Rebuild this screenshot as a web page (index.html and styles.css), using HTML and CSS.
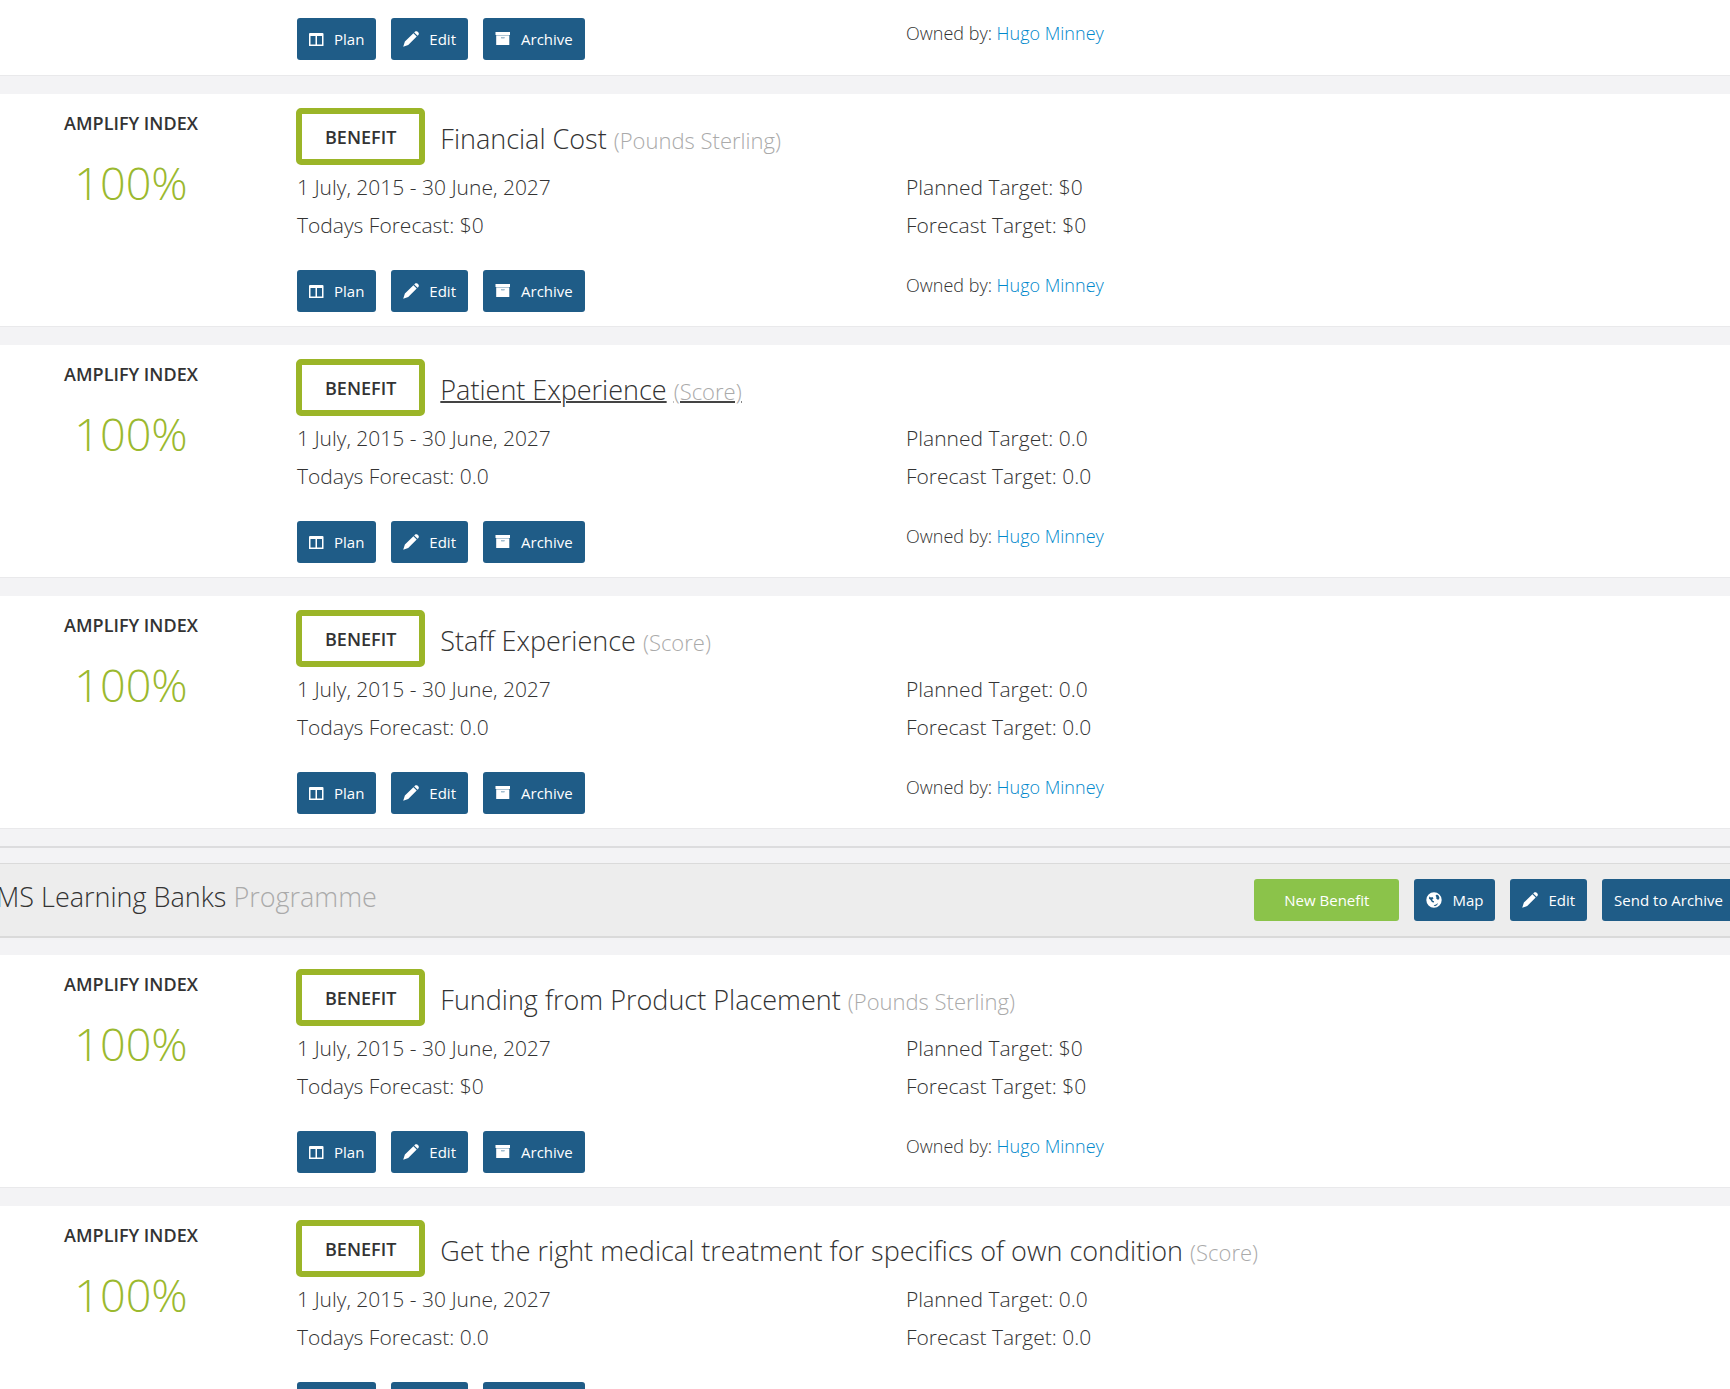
FILE: index.html
```
<!DOCTYPE html>
<html lang="en">
<head>
    <meta charset="UTF-8">
    <meta name="viewport" content="width=device-width, initial-scale=1.0">
    <title>Benefits</title>
    <link rel="stylesheet" href="styles.css">
</head>
<body>
    <!-- icon sprite -->
    <svg class="sprite" aria-hidden="true">
        <symbol id="icon-plan" viewBox="0 0 15 15">
            <path fill="currentColor" fill-rule="evenodd" d="M1 1h12.500a1 1 0 0 1 1 1v11.500a.5.5 0 0 1-.5.5H.5a.5.5 0 0 1-.5-.5V2a1 1 0 0 1 1-1zM1.500 4v8.600h5V4zM8 4v8.600h5V4z"/>
        </symbol>
        <symbol id="icon-edit" viewBox="0 0 16 16">
            <path fill="currentColor" d="M.2 15.800l1.700-5.200 8.500-8.400 3.300 3.300-8.500 8.600zM11.200 1.400l.9-.8c.7-.6 1.600-.6 2.300 0l1 1c.6.7.6 1.600 0 2.300l-.8.9z"/>
        </symbol>
        <symbol id="icon-archive" viewBox="0 0 16 16">
            <path fill="currentColor" fill-rule="evenodd" d="M.5 1H15v3H.5zM1.200 4.600h13.100V14H1.200zM6.200 6v1.300h3.200V6z"/>
            <path fill="currentColor" opacity=".6" d="M1.200 4h13.100v.6H1.200zM6.200 6h3.200v1.300H6.200z"/>
        </symbol>
        <symbol id="icon-globe" viewBox="0 0 16 16">
            <path fill="currentColor" fill-rule="evenodd" d="M8 .3a7.700 7.700 0 1 1 0 15.400A7.700 7.700 0 0 1 8 .3zM3.300 4.600l1.600.8 1.600-.4 1 1.400-1.300 1 .5 1.300 1.500.6-.8 1.500-1.700-1.100-1.300-2-1.400-.9zM9.500 3.800l1.400-1.200 1.600 1 .9 1.900-.3 1.700-1.300.6-1.600-1.300.2-1.400zM7.600 13.200l2.500-.8 1.700-1.300-.6 1.900-2.200 1.300z"/>
        </symbol>
    </svg>

    <main class="page">
        <div class="cards">
            <section class="card card-first">
                <div class="actions">
                    <button type="button" class="btn"><svg class="icon icon-plan"><use href="#icon-plan"/></svg>Plan</button>
                    <button type="button" class="btn"><svg class="icon"><use href="#icon-edit"/></svg>Edit</button>
                    <button type="button" class="btn"><svg class="icon"><use href="#icon-archive"/></svg>Archive</button>
                </div>
                <p class="owner">Owned by: <a href="#">Hugo Minney</a></p>
            </section>

            <section class="card">
                <div class="index">
                    <h3>AMPLIFY INDEX</h3>
                    <div class="percent">100%</div>
                </div>
                <div class="title">
                    <span class="badge">BENEFIT</span>
                    <h2><span>Financial Cost</span> <small>(Pounds Sterling)</small></h2>
                </div>
                <div class="facts">
                    <p>1 July, 2015 - 30 June, 2027</p>
                    <p>Todays Forecast: $0</p>
                </div>
                <div class="facts">
                    <p>Planned Target: $0</p>
                    <p>Forecast Target: $0</p>
                </div>
                <div class="actions">
                    <button type="button" class="btn"><svg class="icon icon-plan"><use href="#icon-plan"/></svg>Plan</button>
                    <button type="button" class="btn"><svg class="icon"><use href="#icon-edit"/></svg>Edit</button>
                    <button type="button" class="btn"><svg class="icon"><use href="#icon-archive"/></svg>Archive</button>
                </div>
                <p class="owner">Owned by: <a href="#">Hugo Minney</a></p>
            </section>

            <section class="card">
                <div class="index">
                    <h3>AMPLIFY INDEX</h3>
                    <div class="percent">100%</div>
                </div>
                <div class="title active">
                    <span class="badge">BENEFIT</span>
                    <h2><span>Patient Experience</span> <small>(Score)</small></h2>
                </div>
                <div class="facts">
                    <p>1 July, 2015 - 30 June, 2027</p>
                    <p>Todays Forecast: 0.0</p>
                </div>
                <div class="facts">
                    <p>Planned Target: 0.0</p>
                    <p>Forecast Target: 0.0</p>
                </div>
                <div class="actions">
                    <button type="button" class="btn"><svg class="icon icon-plan"><use href="#icon-plan"/></svg>Plan</button>
                    <button type="button" class="btn"><svg class="icon"><use href="#icon-edit"/></svg>Edit</button>
                    <button type="button" class="btn"><svg class="icon"><use href="#icon-archive"/></svg>Archive</button>
                </div>
                <p class="owner">Owned by: <a href="#">Hugo Minney</a></p>
            </section>

            <section class="card">
                <div class="index">
                    <h3>AMPLIFY INDEX</h3>
                    <div class="percent">100%</div>
                </div>
                <div class="title">
                    <span class="badge">BENEFIT</span>
                    <h2><span>Staff Experience</span> <small>(Score)</small></h2>
                </div>
                <div class="facts">
                    <p>1 July, 2015 - 30 June, 2027</p>
                    <p>Todays Forecast: 0.0</p>
                </div>
                <div class="facts">
                    <p>Planned Target: 0.0</p>
                    <p>Forecast Target: 0.0</p>
                </div>
                <div class="actions">
                    <button type="button" class="btn"><svg class="icon icon-plan"><use href="#icon-plan"/></svg>Plan</button>
                    <button type="button" class="btn"><svg class="icon"><use href="#icon-edit"/></svg>Edit</button>
                    <button type="button" class="btn"><svg class="icon"><use href="#icon-archive"/></svg>Archive</button>
                </div>
                <p class="owner">Owned by: <a href="#">Hugo Minney</a></p>
            </section>
        </div>

        <hr class="divider">

        <header class="programme">
            <h1>MS Learning Banks <small>Programme</small></h1>
            <div class="actions">
                <button type="button" class="btn btn-new">New Benefit</button>
                <button type="button" class="btn"><svg class="icon"><use href="#icon-globe"/></svg>Map</button>
                <button type="button" class="btn"><svg class="icon"><use href="#icon-edit"/></svg>Edit</button>
                <button type="button" class="btn">Send to Archive</button>
            </div>
        </header>

        <div class="cards">
            <section class="card">
                <div class="index">
                    <h3>AMPLIFY INDEX</h3>
                    <div class="percent">100%</div>
                </div>
                <div class="title">
                    <span class="badge">BENEFIT</span>
                    <h2><span>Funding from Product Placement</span> <small>(Pounds Sterling)</small></h2>
                </div>
                <div class="facts">
                    <p>1 July, 2015 - 30 June, 2027</p>
                    <p>Todays Forecast: $0</p>
                </div>
                <div class="facts">
                    <p>Planned Target: $0</p>
                    <p>Forecast Target: $0</p>
                </div>
                <div class="actions">
                    <button type="button" class="btn"><svg class="icon icon-plan"><use href="#icon-plan"/></svg>Plan</button>
                    <button type="button" class="btn"><svg class="icon"><use href="#icon-edit"/></svg>Edit</button>
                    <button type="button" class="btn"><svg class="icon"><use href="#icon-archive"/></svg>Archive</button>
                </div>
                <p class="owner">Owned by: <a href="#">Hugo Minney</a></p>
            </section>

            <section class="card">
                <div class="index">
                    <h3>AMPLIFY INDEX</h3>
                    <div class="percent">100%</div>
                </div>
                <div class="title">
                    <span class="badge">BENEFIT</span>
                    <h2><span>Get the right medical treatment for specifics of own condition</span> <small>(Score)</small></h2>
                </div>
                <div class="facts">
                    <p>1 July, 2015 - 30 June, 2027</p>
                    <p>Todays Forecast: 0.0</p>
                </div>
                <div class="facts">
                    <p>Planned Target: 0.0</p>
                    <p>Forecast Target: 0.0</p>
                </div>
                <div class="actions">
                    <button type="button" class="btn"><svg class="icon icon-plan"><use href="#icon-plan"/></svg>Plan</button>
                    <button type="button" class="btn"><svg class="icon"><use href="#icon-edit"/></svg>Edit</button>
                    <button type="button" class="btn"><svg class="icon"><use href="#icon-archive"/></svg>Archive</button>
                </div>
                <p class="owner">Owned by: <a href="#">Hugo Minney</a></p>
            </section>
        </div>
    </main>
</body>
</html>
```
FILE: styles.css
```
* {
    box-sizing: border-box;
}
body {
    margin: 0;
    height: 100vh;
    overflow: hidden;
    background: #f3f3f5;
    color: #333;
    font-family: "Open Sans", sans-serif;
    font-weight: 300;
}
h1, h2, h3, p {
    margin: 0;
    font-weight: 300;
}
a {
    color: #0088cc;
    text-decoration: none;
}
.sprite {
    display: none;
}
.page {
    margin: 0 -5px 0 -4px;
}

/* benefit cards */
.cards {
    display: flex;
    flex-direction: column;
    gap: 18px;
}
.card {
    display: grid;
    grid-template-columns: 301fr 609fr 829fr;
    padding: 14px 0;
    background: #fff;
    border-bottom: 1px solid #e9e9eb;
}
.card-first {
    padding: 18px 0 15px;
}
.card-first .actions {
    grid-column: 2;
}
.index {
    grid-row: span 3;
    padding: 3px 31px 0 0;
    text-align: center;
}
.index h3 {
    font-size: 18px;
    font-weight: 600;
    line-height: 24px;
}
.percent {
    margin-top: 18px;
    color: #9bb92f;
    font-size: 45px;
    line-height: 60px;
}
.title {
    grid-column: span 2;
    display: flex;
    gap: 15px;
    margin-left: -1px;
}
.badge {
    padding: 9px 23px 7px;
    border: 6px solid #9bb528;
    border-radius: 5px;
    font-size: 18px;
    font-weight: 600;
    line-height: 29px;
}
.title h2 {
    padding-top: 13px;
    font-size: 27px;
    line-height: 36px;
}
.title small {
    color: #aaa;
    font-size: 22px;
}
.title.active span + small,
.title.active h2 span {
    text-decoration: underline 2px #444;
}
.facts {
    padding: 3px 0 26px;
}
.facts p {
    font-size: 21px;
    line-height: 38px;
}
.actions {
    display: flex;
    gap: 15px;
}
.owner {
    font-size: 18px;
    line-height: 30px;
}

/* buttons */
.btn {
    display: flex;
    align-items: center;
    gap: 10px;
    height: 42px;
    padding: 0 12px;
    border: 0;
    border-radius: 3px;
    background: #1f5c87;
    color: #fff;
    font-family: inherit;
    font-size: 15px;
    font-weight: 400;
    white-space: nowrap;
}
.btn-new {
    padding: 0 30px;
    background: #8bc34a;
}
.icon {
    width: 16px;
    height: 16px;
}
.icon-plan {
    width: 15px;
    height: 15px;
}

/* programme heading */
.divider {
    height: 2px;
    margin: 17px 0 15px;
    border: 0;
    background: #dcdcde;
}
.programme {
    display: flex;
    justify-content: space-between;
    margin-bottom: 17px;
    padding: 15px 0;
    background: #ededed;
    border-top: 1px solid #dadada;
    border-bottom: 2px solid #dadada;
}
.programme h1 {
    font-size: 27px;
    line-height: 36px;
}
.programme small {
    color: #aaa;
    font-size: 27px;
}
```
